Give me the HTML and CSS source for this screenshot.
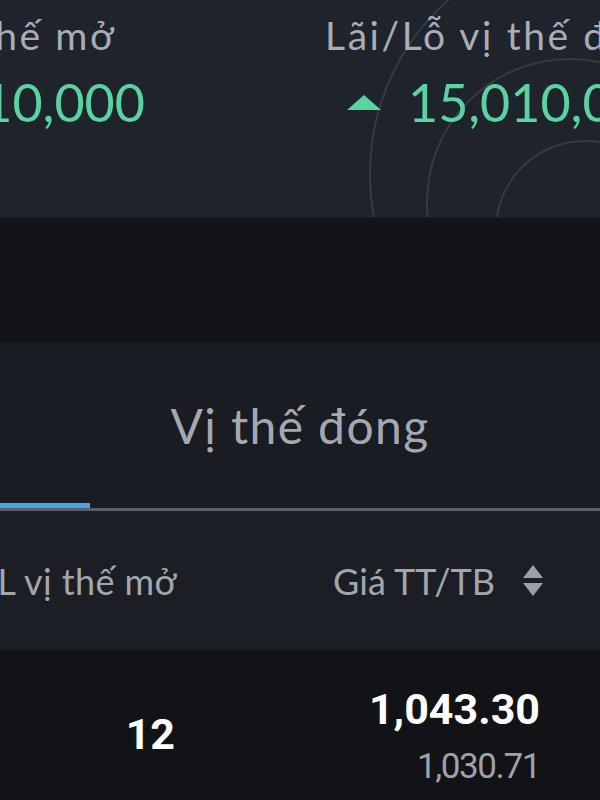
FILE: index.html
```html
<!DOCTYPE html>
<html lang="vi">
<head>
    <meta charset="UTF-8">
    <meta name="viewport" content="width=device-width, initial-scale=1.0">
    <title>Vị thế</title>
    <link rel="stylesheet" href="styles.css">
</head>
<body>
    <section class="summary">
        <svg class="summary-bg" width="600" height="217" viewBox="0 0 600 217">
            <circle cx="603" cy="174" r="233"></circle>
            <circle cx="570" cy="202" r="143"></circle>
            <circle cx="585" cy="230" r="89"></circle>
        </svg>
        <div class="stats">
            <div class="stat">
                <div class="stat-label">Lãi/Lỗ vị thế mở</div>
                <div class="stat-value"><span class="arrow-up"></span>15,010,000</div>
            </div>
            <div class="stat">
                <div class="stat-label">Lãi/Lỗ vị thế đóng</div>
                <div class="stat-value"><span class="arrow-up"></span>15,010,000</div>
            </div>
        </div>
    </section>

    <div class="spacer"></div>

    <nav class="tabs">
        <div class="tab-list">
            <div class="tab active">Vị thế mở</div>
            <div class="tab">Vị thế đóng</div>
        </div>
    </nav>

    <div class="table-head">
        <div class="cell cell-qty">KL vị thế mở</div>
        <div class="cell cell-price">
            Giá TT/TB
            <span class="sort">
                <span class="sort-up"></span>
                <span class="sort-down"></span>
            </span>
        </div>
    </div>

    <div class="table-row">
        <div class="cell cell-qty"><span class="qty">12</span></div>
        <div class="cell cell-price">
            <div class="price">
                <span class="price-now">1,043.30</span>
                <span class="price-avg">1,030.71</span>
            </div>
        </div>
    </div>
</body>
</html>
```

FILE: styles.css
```css
* {
    margin: 0;
    padding: 0;
    box-sizing: border-box;
}
html, body {
    width: 600px;
    height: 800px;
    overflow: hidden;
}
body {
    font-family: Lato, "Noto Sans", sans-serif;
    background-color: #111317;
    color: #a4a8af;
}
.summary {
    position: relative;
    height: 217px;
    background-color: #1f232b;
    overflow: hidden;
}
.summary-bg {
    position: absolute;
    top: 0;
    left: 0;
}
.summary-bg circle {
    fill: none;
    stroke: #363a44;
    stroke-width: 2;
}
.stats {
    position: relative;
    display: flex;
    margin-left: -203px;
    padding-top: 10px;
}
.stat {
    flex: none;
    width: 528px;
    white-space: nowrap;
}
.stat-label {
    font-size: 39px;
    line-height: 50px;
    letter-spacing: 2.6px;
    color: #a9adb5;
}
.stat-value {
    display: flex;
    align-items: center;
    margin-top: 11px;
    font-size: 52px;
    line-height: 62px;
    color: #5ad3a2;
}
.arrow-up {
    width: 0;
    height: 0;
    margin: 0 27px 0 22px;
    border-left: 17px solid transparent;
    border-right: 17px solid transparent;
    border-bottom: 15px solid #5ad3a2;
}
.spacer {
    height: 125px;
    background-color: #131419;
    border-top: 2px solid #16181d;
}
.tabs {
    height: 169px;
    background-color: #1a1c23;
    border-bottom: 3px solid #5b5f67;
}
.tab-list {
    display: flex;
    height: 100%;
    margin-left: -330px;
}
.tab {
    flex: none;
    width: 420px;
    display: flex;
    align-items: center;
    justify-content: center;
    padding-top: 5px;
    font-size: 48px;
    letter-spacing: 1.4px;
    color: #a4a8b0;
    border-bottom: 5px solid transparent;
}
.tab.active {
    border-bottom-color: #43a6e8;
}
.table-head,
.table-row {
    display: grid;
    grid-template-columns: 177px 1fr;
    padding-right: 57px;
}
.table-head {
    height: 139px;
    background-color: #1c1e25;
    font-size: 36px;
    color: #a2a6ad;
}
.table-head .cell-qty {
    letter-spacing: 0.4px;
}
.table-row {
    height: 150px;
    padding-top: 18px;
    background-color: #111317;
}
.cell {
    display: flex;
    align-items: center;
    justify-content: flex-end;
    white-space: nowrap;
}
.sort {
    display: flex;
    flex-direction: column;
    gap: 5px;
    margin-left: 28px;
}
.sort-up,
.sort-down {
    width: 0;
    height: 0;
    border-left: 10px solid transparent;
    border-right: 10px solid transparent;
}
.sort-up {
    border-bottom: 13px solid #9aa0a8;
}
.sort-down {
    border-top: 13px solid #9aa0a8;
}
.table-row .cell-price {
    padding-right: 3px;
}
.qty {
    font-family: Roboto, "Liberation Sans", sans-serif;
    font-weight: 700;
    font-size: 43px;
    color: #ffffff;
    margin-right: 2px;
}
.price {
    display: flex;
    flex-direction: column;
    align-items: flex-end;
    padding-top: 7px;
}
.price-now {
    font-family: Roboto, "Liberation Sans", sans-serif;
    font-weight: 700;
    font-size: 43px;
    line-height: 52px;
    color: #ffffff;
}
.price-avg {
    font-family: Roboto, "Liberation Sans", sans-serif;
    font-size: 35px;
    line-height: 50px;
    margin-top: 7px;
    letter-spacing: -1.4px;
    color: #9ea2a9;
}
```
